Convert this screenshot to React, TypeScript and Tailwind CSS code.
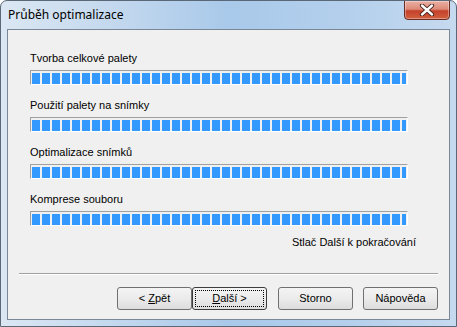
import React from "react";

const font = { fontFamily: '"Liberation Sans", Arial, sans-serif' };

function Bar() {
  const segs = Array.from({ length: 38 });
  return (
    <div className="w-[378px] h-[15px] border-t border-l border-t-[#a0a0a0] border-l-[#a0a0a0] border-b border-r border-b-white border-r-white bg-[#f0f0f0] p-[1px]">
      <div className="flex gap-[2px] overflow-hidden h-[11px] w-[374px] mt-[1px]">
        {segs.map((_, i) => (
          <div key={i} className="shrink-0 w-[8px] h-[11px] bg-[#3399ff]" />
        ))}
      </div>
    </div>
  );
}

function Group({ label, first }: { label: React.ReactNode; first?: boolean }) {
  return (
    <div className={first ? "" : "mt-[14px]"}>
      <div className="h-[13px] leading-[13px] text-[11px] text-black mb-[5px]">{label}</div>
      <Bar />
    </div>
  );
}

function Btn({ children, def, left }: { children: React.ReactNode; def?: boolean; left?: string }) {
  return (
    <div
      className={
        "w-[75px] h-[23px] rounded-[3px] flex items-center justify-center text-[11px] text-black bg-gradient-to-b from-[#f4f4f4] via-[#ebebeb] to-[#dddddd] " +
        (def ? "border border-[#3c3c3c] p-[2px] " : "border border-[#707070] ") +
        (left || "")
      }
    >
      {def ? (
        <div className="w-full h-full border border-dotted border-black flex items-center justify-center">{children}</div>
      ) : (
        children
      )}
    </div>
  );
}

export default function App() {
  return (
    <div className="w-[457px] h-[327px] bg-white" style={font}>
      <div className="w-[457px] h-[327px] rounded-t-[7px] border border-[#5a6878] flex flex-col overflow-hidden bg-[linear-gradient(90deg,#dbe7f3_0%,#c3d8ee_25%,#a9c9ea_50%,#b3cfec_75%,#c6daef_100%)]">
        {/* Title bar */}
        <div className="h-[28px] flex items-start relative shrink-0">
          <div
            className="ml-[7px] mt-[7px] text-[12px] leading-[14px] text-black"
            style={{ fontFamily: '"Noto Sans", "Liberation Sans", sans-serif' }}
          >
            Průběh optimalizace
          </div>
          <div className="absolute right-[6px] top-[-1px] w-[46px] h-[20px] rounded-b-[4px] border border-[#6a2b22] bg-[linear-gradient(180deg,#eab0a4_0%,#dd8a78_45%,#c4412a_55%,#d2603f_100%)] flex items-center justify-center shadow-[inset_0_0_0_1px_rgba(255,255,255,0.35)]">
            <svg width="16" height="12" viewBox="0 0 16 12">
              <path d="M3 1.5 L13 10.5 M13 1.5 L3 10.5" stroke="#3a1a14" strokeWidth="4.2" strokeLinecap="round" />
              <path d="M3 1.5 L13 10.5 M13 1.5 L3 10.5" stroke="#ffffff" strokeWidth="2.4" strokeLinecap="round" />
            </svg>
          </div>
        </div>
        {/* Client area */}
        <div className="mx-[6px] h-[291px] border border-[#7a8796] bg-[#f0f0f0] shrink-0 flex flex-col">
          <div className="pl-[22px] pt-[22px]">
            <Group first label="Tvorba celkové palety" />
            <Group label="Použití palety na snímky" />
            <Group label="Optimalizace snímků" />
            <Group label="Komprese souboru" />
          </div>
          <div className="flex justify-end pr-[33px] mt-[10px] h-[13px] leading-[13px] text-[11px] text-black">
            Stlač Další k pokračování
          </div>
          <div className="ml-[11px] w-[419px] mt-[24px] border-t border-t-[#a0a0a0] border-b border-b-white" />
          <div className="flex mt-[12px] pl-[109px]">
            <Btn>
              &lt; <span className="underline ml-[3px]">Z</span>pět
            </Btn>
            <Btn def>
              <span className="underline">D</span>alší &gt;
            </Btn>
            <Btn left="ml-[11px]">Storno</Btn>
            <Btn left="ml-[10px]">Nápověda</Btn>
          </div>
        </div>
      </div>
    </div>
  );
}
